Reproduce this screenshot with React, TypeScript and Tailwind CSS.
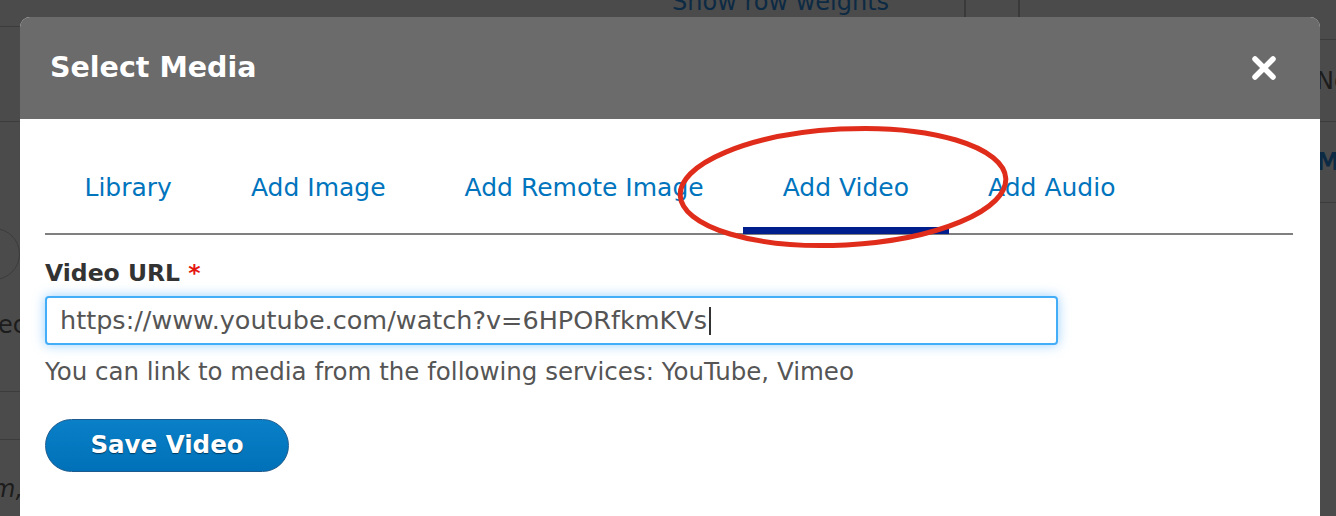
import React from "react";

const TABS = ["Library", "Add Image", "Add Remote Image", "Add Video", "Add Audio"];
const ACTIVE = "Add Video";

/** Page left behind the modal, dimmed by the overlay. */
function Backdrop() {
  return (
    <div className="flex h-full w-full bg-[#4b4b4b] text-[24px] text-[#1c1c1c]">
      {/* left edge of the page */}
      <div className="flex w-[20px] shrink-0 flex-col overflow-hidden">
        <div className="h-[27px] shrink-0 border-b border-[#3c3c3c]" />
        <div className="h-[95px] shrink-0 border-b border-[#3c3c3c]" />
        <div className="flex h-[270px] shrink-0 flex-col border-b border-[#3c3c3c] pt-[106px]">
          <div className="ml-[-40px] h-[52px] w-[60px] shrink-0 rounded-full border border-[#3c3c3c]" />
          <div className="ml-[-2px] mt-[30px] leading-[30px]">ec</div>
        </div>
        <div className="h-[48px] shrink-0 border-b border-[#3c3c3c]" />
        <div className="ml-[-8px] mt-[34px] italic leading-[30px]">m,</div>
      </div>

      {/* centre strip above the modal */}
      <div className="flex h-[17px] w-[1300px] shrink-0 overflow-hidden">
        <div className="w-[652px] shrink-0" />
        <div className="mt-[-13px] w-[292px] shrink-0 leading-[30px] text-[#0d2a44]">Show row weights</div>
        <div className="h-full w-[2px] shrink-0 bg-[#3a3a3a]" />
        <div className="w-[52px] shrink-0" />
        <div className="h-full w-[2px] shrink-0 bg-[#3a3a3a]" />
      </div>

      {/* right edge of the page */}
      <div className="flex w-[16px] shrink-0 flex-col overflow-hidden">
        <div className="h-[40px] shrink-0 border-b border-[#3c3c3c]" />
        <div className="flex h-[82px] shrink-0 items-center border-b border-[#3c3c3c]">
          <span className="ml-[-4px] leading-[30px]">No</span>
        </div>
        <div className="flex h-[81px] shrink-0 items-center border-b border-[#3c3c3c]">
          <span className="ml-[-4px] font-bold leading-[30px] text-[#0d2a44]">MA</span>
        </div>
      </div>
    </div>
  );
}

function CloseIcon() {
  return (
    <svg width="26" height="26" viewBox="0 0 26 26" fill="none">
      <path d="M4 4L22 22M22 4L4 22" stroke="#fff" strokeWidth="5.5" strokeLinecap="round" />
    </svg>
  );
}

export default function App() {
  return (
    <div className="relative h-[516px] w-[1336px] overflow-hidden font-['DejaVu_Sans',sans-serif]">
      <Backdrop />

      {/* modal dialog over the dimmed page */}
      <div className="absolute left-[20px] top-[17px] w-[1300px] overflow-hidden rounded-t-[10px] bg-white">
        {/* title bar */}
        <div className="flex h-[102px] items-center justify-between bg-[#6b6b6b] pl-[30px] pr-[41px]">
          <h1 className="text-[28.5px] font-bold text-white">Select Media</h1>
          <button aria-label="close" className="flex h-[30px] w-[30px] items-center justify-center">
            <CloseIcon />
          </button>
        </div>

        <div className="h-[400px] pl-[25px] pr-[27px] pt-[54px]">
          {/* tabs */}
          <ul className="flex border-b-2 border-[#7f7f7f]">
            {TABS.map((t) => (
              <li key={t} className="relative px-[39.5px] pb-[30px] text-[25px] leading-[30px] text-[#0074bd]">
                {t}
                {t === ACTIVE && <span className="absolute bottom-[-1px] left-0 right-0 h-[7px] bg-[#001e8c]" />}
              </li>
            ))}
          </ul>

          {/* form */}
          <label className="mt-[24px] block text-[23.5px] font-bold leading-[28px] text-[#333]">
            Video URL <span className="text-[#e4160f]">*</span>
          </label>
          <div className="mt-[9px] flex h-[49px] w-[1013px] items-center rounded-[4px] border-2 border-[#44adf7] bg-white pl-[13px] shadow-[0_0_12px_rgba(70,170,255,0.55)]">
            <span className="text-[25.5px] text-[#555]">https://www.youtube.com/watch?v=6HPORfkmKVs</span>
            <span className="ml-[2px] h-[28px] w-[2px] bg-[#333]" />
          </div>
          <p className="mt-[13px] text-[24.5px] leading-[28px] text-[#555]">
            You can link to media from the following services: YouTube, Vimeo
          </p>
          <button className="mt-[33px] flex h-[53px] w-[244px] items-center justify-center rounded-full border border-[#1d5b8e] bg-gradient-to-b from-[#0a80c8] to-[#0071b8] text-[24.5px] font-bold text-white [text-shadow:0_1px_1px_rgba(0,0,0,0.5)]">
            Save Video
          </button>
        </div>
      </div>

      {/* red annotation ring */}
      <svg className="pointer-events-none absolute left-0 top-0" width="1336" height="516">
        <ellipse cx="843" cy="187" rx="163" ry="58" fill="none" stroke="#e02d1b" strokeWidth="5" transform="rotate(-3 843 187)" />
      </svg>
    </div>
  );
}
